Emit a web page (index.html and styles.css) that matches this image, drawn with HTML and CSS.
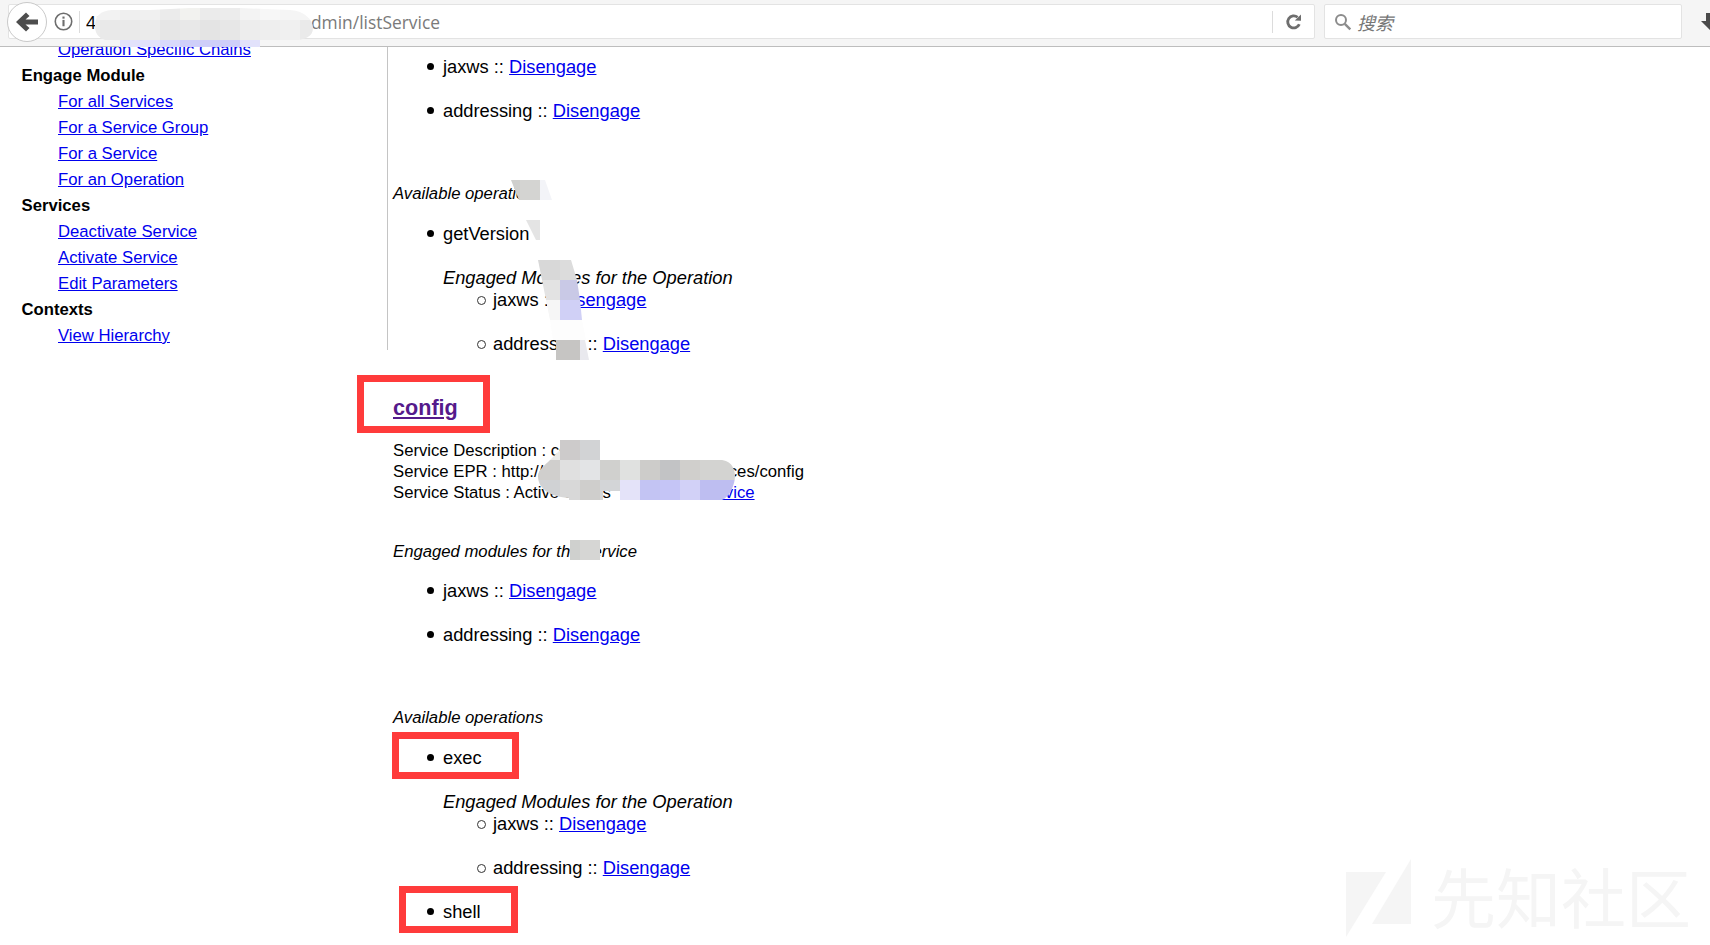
FILE: index.html
```html
<!DOCTYPE html>
<html lang="en">
<head>
<meta charset="utf-8">
<title>listService</title>
<link rel="stylesheet" href="styles.css">
</head>
<body>
<header class="toolbar">
  <button class="back" aria-label="Back">
    <svg width="26" height="26" viewBox="0 0 26 26"><path d="M2 13 L12 3.500 L15.500 7 L11.500 10.500 H24 V15.500 H11.500 L15.500 19 L12 22.500 Z" fill="#4d4d4d"/></svg>
  </button>
  <div class="urlbar">
    <svg class="info" width="19" height="19" viewBox="0 0 18 18"><circle cx="9" cy="9" r="7.800" fill="none" stroke="#6e6e6e" stroke-width="1.500"/><rect x="8" y="7.500" width="2" height="6" fill="#6e6e6e"/><rect x="8" y="4.300" width="2" height="2" fill="#6e6e6e"/></svg>
    <span class="sep"></span>
    <span class="url"><span class="host">4</span><span class="hidden-host">7.93.0.1:8080/axis2-a</span><span class="path">dmin/listService</span></span>
    <span class="sep end"></span>
    <svg class="reload" width="18" height="18" viewBox="0 0 18 18"><path d="M14.300 11.200 A6 6 0 1 1 12.600 4.300" fill="none" stroke="#6e6e6e" stroke-width="2.800"/><path d="M9.800 7.500 L16 7.800 L16 1.500 Z" fill="#6e6e6e"/></svg>
  </div>
  <div class="search">
    <svg width="18" height="18" viewBox="0 0 18 18"><circle cx="7" cy="7" r="5" fill="none" stroke="#8c8c8c" stroke-width="2"/><path d="M10.800 10.800 L16.300 16.300" stroke="#8c8c8c" stroke-width="2.400"/></svg>
    <span class="search-text">搜索</span>
  </div>
  <svg class="download" width="20" height="24" viewBox="0 0 20 24"><path d="M6 3 H14 V11 H19 L10 20 L1 11 H6 Z" fill="#4a4a4a"/></svg>
</header>

<div class="page">
  <nav class="sidebar">
    <a class="nav-link" href="#">Operation Specific Chains</a>
    <h3>Engage Module</h3>
    <a class="nav-link" href="#">For all Services</a>
    <a class="nav-link" href="#">For a Service Group</a>
    <a class="nav-link" href="#">For a Service</a>
    <a class="nav-link" href="#">For an Operation</a>
    <h3>Services</h3>
    <a class="nav-link" href="#">Deactivate Service</a>
    <a class="nav-link" href="#">Activate Service</a>
    <a class="nav-link" href="#">Edit Parameters</a>
    <h3>Contexts</h3>
    <a class="nav-link" href="#">View Hierarchy</a>
  </nav>

  <main class="content">
    <ul class="modules first">
      <li>jaxws :: <a href="#">Disengage</a></li>
      <li>addressing :: <a href="#">Disengage</a></li>
    </ul>
    <p class="label gap-ops">Available operations</p>
    <ul class="ops">
      <li>getVersion
        <p class="label op-head">Engaged Modules for the Operation</p>
        <ul class="sub">
          <li>jaxws :: <a href="#">Disengage</a></li>
          <li>addressing :: <a href="#">Disengage</a></li>
        </ul>
      </li>
    </ul>
    <h2><a href="#">config</a></h2>
    <p class="info-lines">Service Description : config<br>Service EPR : http://47.93.0.1:8080/axis/services/config<br>Service Status : Active Status <a class="status-link" href="#">Disable Service</a></p>
    <p class="label gap-mods">Engaged modules for the service</p>
    <ul class="modules wide">
      <li>jaxws :: <a href="#">Disengage</a></li>
      <li>addressing :: <a href="#">Disengage</a></li>
    </ul>
    <p class="label gap-ops">Available operations</p>
    <ul class="ops">
      <li>exec
        <p class="label op-head">Engaged Modules for the Operation</p>
        <ul class="sub">
          <li>jaxws :: <a href="#">Disengage</a></li>
          <li>addressing :: <a href="#">Disengage</a></li>
        </ul>
      </li>
      <li class="next-op">shell</li>
    </ul>
  </main>
</div>

<svg class="overlay" width="1710" height="945" viewBox="0 0 1710 945" aria-hidden="true">
  <defs>
    <clipPath id="blob-url"><path d="M112 10 H150 L190 8 H240 L290 10 C305 11 313 20 313 28 C313 37 305 40 290 41 L260 47 H120 L112 41 C100 40 95 35 95 26 C95 16 100 11 112 10 Z"/></clipPath>
    <clipPath id="blob-epr"><path d="M560 440 H600 V460 H720 C732 460 735 470 735 476 C735 484 730 497 722 500 H620 V491 H603 V500 H569 V498 C552 497 538 490 538 476 C538 470 545 465 550 460 L560 450 Z"/></clipPath>
  </defs>

  <g clip-path="url(#blob-url)">
    <rect x="90" y="0" width="40" height="20" fill="#f2f2f2"/><rect x="120" y="0" width="20" height="20" fill="#efefef"/><rect x="140" y="0" width="20" height="20" fill="#f0f0f0"/><rect x="160" y="0" width="20" height="20" fill="#ebebeb"/><rect x="180" y="0" width="20" height="20" fill="#f2f2ef"/><rect x="200" y="0" width="20" height="20" fill="#ebebeb"/><rect x="220" y="0" width="20" height="20" fill="#ececec"/><rect x="240" y="0" width="20" height="20" fill="#f3f3f3"/><rect x="260" y="0" width="20" height="20" fill="#f7f7f7"/><rect x="280" y="0" width="40" height="20" fill="#f5f5f5"/>
    <rect x="90" y="20" width="20" height="20" fill="#ececec"/><rect x="100" y="20" width="20" height="20" fill="#e9e9e9"/><rect x="120" y="20" width="20" height="20" fill="#eaeaea"/><rect x="140" y="20" width="20" height="20" fill="#ebebeb"/><rect x="160" y="20" width="20" height="20" fill="#e6e6e6"/><rect x="180" y="20" width="20" height="20" fill="#e8e8e8"/><rect x="200" y="20" width="20" height="20" fill="#e4e4e4"/><rect x="220" y="20" width="20" height="20" fill="#e7e7e7"/><rect x="240" y="20" width="20" height="20" fill="#ededed"/><rect x="260" y="20" width="20" height="20" fill="#eeeeee"/><rect x="280" y="20" width="20" height="20" fill="#f0f0f0"/><rect x="300" y="20" width="20" height="20" fill="#eaeaea"/>
    <rect x="90" y="40" width="30" height="10" fill="#f5f5f5"/><rect x="120" y="40" width="40" height="10" fill="#e2e2fb"/><rect x="160" y="40" width="20" height="10" fill="#d9d9fb"/><rect x="180" y="40" width="60" height="10" fill="#cfcff9"/><rect x="240" y="40" width="20" height="10" fill="#e2e2fb"/>
  </g>

  <g clip-path="url(#blob-epr)">
    <rect x="530" y="440" width="30" height="20" fill="#ebebe8"/><rect x="560" y="440" width="20" height="20" fill="#cdcbcb"/><rect x="580" y="440" width="20" height="20" fill="#d2d3d5"/>
    <rect x="530" y="460" width="30" height="20" fill="#d0cfcd"/><rect x="560" y="460" width="20" height="20" fill="#e0e0e0"/><rect x="580" y="460" width="20" height="20" fill="#e3e4e6"/><rect x="600" y="460" width="20" height="20" fill="#d0d0ce"/><rect x="620" y="460" width="20" height="20" fill="#e0e1e0"/><rect x="640" y="460" width="20" height="20" fill="#cdccca"/><rect x="660" y="460" width="20" height="20" fill="#c2c3c5"/><rect x="680" y="460" width="20" height="20" fill="#d0cfcc"/><rect x="700" y="460" width="40" height="20" fill="#d3d3d1"/>
    <rect x="530" y="480" width="30" height="30" fill="#d0d2d4"/><rect x="560" y="480" width="20" height="30" fill="#d8d8d8"/><rect x="580" y="480" width="20" height="30" fill="#cfcecc"/><rect x="600" y="480" width="20" height="30" fill="#d3d5d7"/><rect x="620" y="480" width="20" height="30" fill="#e4e3f9"/><rect x="640" y="480" width="20" height="30" fill="#c3c4f3"/><rect x="660" y="480" width="20" height="30" fill="#c5c5f6"/><rect x="680" y="480" width="20" height="30" fill="#d2d1f7"/><rect x="700" y="480" width="40" height="30" fill="#bebef1"/>
  </g>
  <rect x="620" y="500" width="67" height="8" fill="#fff"/>

  <polygon points="511,180 520,180 520,200 519,200" fill="#cfcfcd"/>
  <rect x="520" y="180" width="20" height="20" fill="#d4d4d2"/>
  <polygon points="540,180 545,180 552,200 540,200" fill="#f3f4f8"/>
  <polygon points="526,220 540,220 540,240 536,240" fill="#e4e4e4"/>
  <polygon points="538,260 560,260 560,280 542,280" fill="#d8d8d8"/>
  <polygon points="560,260 571,260 577,280 560,280" fill="#dcdcdc"/>
  <polygon points="542,280 560,280 560,300 546,300" fill="#e3e3e3"/>
  <polygon points="560,280 577,280 580,300 560,300" fill="#c9c9e6"/>
  <polygon points="546,300 560,300 560,320 550,320" fill="#f6f6f6"/>
  <polygon points="560,300 580,300 582,320 560,320" fill="#d0d0f6"/>
  <polygon points="550,320 582,320 586,340 553,340" fill="#fdfdfd"/>
  <rect x="556" y="340" width="24" height="20" fill="#c6c5c3"/>
  <polygon points="580,340 585,340 589,360 580,360" fill="#e9e9ee"/>

  <rect x="570" y="540" width="10" height="20" fill="#cfd0ce"/>
  <rect x="580" y="540" width="20" height="20" fill="#d6d6d4"/>

  <g class="annotations">
    <rect x="360.500" y="378.500" width="126" height="51"/>
    <rect x="395.500" y="735.500" width="120" height="40"/>
    <rect x="402.500" y="889.500" width="112" height="40"/>
  </g>

  <g class="watermark">
    <polygon points="1346,872 1386,872 1346,937"/>
    <polygon points="1411,859 1411,924 1372,924"/>
    <text x="1431" y="923">先知社区</text>
  </g>
</svg>
</body>
</html>
```
FILE: styles.css
```css
* { box-sizing: border-box; }
html, body { margin: 0; height: 945px; overflow: hidden; background: #fff; }
body {
  position: relative;
  font-family: "Liberation Sans", Arial, sans-serif;
  font-size: 16.7px;
  color: #000;
}
a { color: #0000ee; }

/* Browser chrome */
.toolbar {
  display: flex;
  align-items: center;
  height: 47px;
  padding: 0 0 3px 8px;
  background: #f5f5f5;
  border-bottom: 1px solid #bdbdbd;
  position: relative;
}
.back {
  position: absolute;
  left: 7px;
  top: 2px;
  width: 40px;
  height: 40px;
  padding: 0;
  display: flex;
  align-items: center;
  justify-content: center;
  background: #fff;
  border: 1px solid #c9c9c9;
  border-radius: 50%;
  z-index: 1;
}
.urlbar {
  flex: 0 0 1307px;
  height: 35px;
  display: flex;
  align-items: center;
  padding-left: 45px;
  background: #fff;
  border: 1px solid #e3e3e3;
  border-radius: 2px;
}
.info { flex: none; }
.sep { width: 1px; height: 22px; background: #dcdcdc; margin: 0 6px 0 6px; flex: none; }
.url {
  flex: 1;
  font-family: "Open Sans", sans-serif;
  font-size: 17.4px;
  white-space: nowrap;
  overflow: hidden;
  color: #7a7a7a;
}
.host { color: #000; }
.hidden-host { display: inline-block; width: 215px; overflow: hidden; vertical-align: bottom; color: #eee; }
.sep.end { margin: 0 12px 0 0; }
.reload { flex: none; margin-right: 11px; }
.search {
  flex: 0 0 358px;
  height: 35px;
  margin-left: 9px;
  display: flex;
  align-items: center;
  gap: 5px;
  padding-left: 9px;
  background: #fff;
  border: 1px solid #e3e3e3;
  border-radius: 2px;
}
.search-text {
  font-family: "Noto Sans CJK SC", sans-serif;
  font-size: 18px;
  font-style: italic;
  color: #767676;
}
.download { flex: none; margin-left: 18px; }

/* Page */
.page {
  display: flex;
  align-items: flex-start;
  height: 898px;
  overflow: hidden;
}
.sidebar {
  flex: 0 0 388px;
  height: 303px;
  border-right: 1px solid #c4c4c4;
  padding: 0 0 0 21.5px;
  line-height: 26px;
}
.sidebar > :first-child { margin-top: -10px; }
.sidebar h3 { margin: 0; font-size: 16.7px; font-weight: bold; line-height: 26px; }
.nav-link { display: block; margin-left: 36.5px; width: max-content; }

.content { flex: 1; padding: 9px 0 0 5px; line-height: 21px; }
.content ul { margin: 0; padding: 0 0 0 50px; font-size: 18.3px; list-style: none; }
.content li { position: relative; }
.content p { margin: 0; }

/* List markers sized as in the reference */
.content li::before {
  content: "";
  position: absolute;
  left: -16.5px;
  top: 7px;
  width: 7px;
  height: 7px;
  border-radius: 50%;
  background: #000;
}
.content .sub li::before {
  left: -16px;
  background: #fff;
  border: 1px solid #333;
}

.modules li { margin-bottom: 23px; }
.modules li:last-child { margin-bottom: 0; }
.label { font-style: italic; }
.gap-ops { margin-top: 62px !important; }
.ops { margin-top: 19px !important; }
.op-head { margin-top: 23px !important; font-size: 18.3px; }
.sub { margin-top: 1px !important; }
.sub li { margin-bottom: 23px; }
.sub li:last-child { margin-bottom: 0; }
.next-op { margin-top: 23px; }
.content h2 { margin: 41px 0 19px; font-size: 21.6px; line-height: 26px; }
.content h2 a { color: #551a8b; }
.status-link { margin-left: 23px; }
.gap-mods { margin-top: 38px !important; }
.modules { margin-top: 18px !important; }
.modules.first { margin-top: 0 !important; }

/* Annotations over the screenshot */
.overlay { position: absolute; left: 0; top: 0; pointer-events: none; }
.annotations rect { fill: none; stroke: #ff3b3b; stroke-width: 7; }
.watermark polygon { fill: #f5f5f5; }
.watermark text {
  font-family: "Noto Sans CJK SC", sans-serif;
  font-size: 65px;
  font-weight: 400;
  fill: #f5f5f5;
}
```
